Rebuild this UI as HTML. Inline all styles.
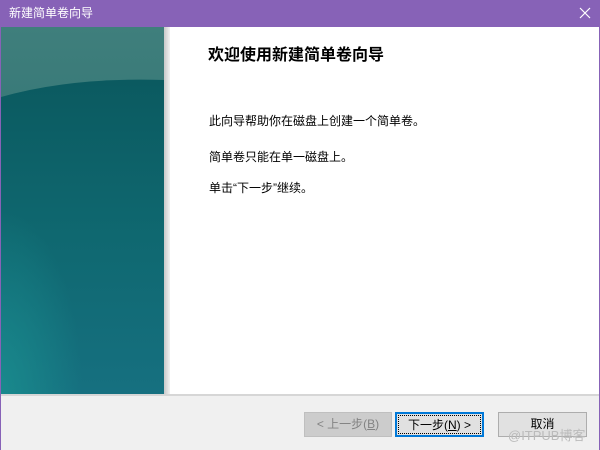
<!DOCTYPE html>
<html><head><meta charset="utf-8"><style>
*{margin:0;padding:0;box-sizing:border-box}
body{width:600px;height:450px;overflow:hidden;background:#fff;position:relative;font-family:"Liberation Sans","Microsoft YaHei","Noto Sans CJK SC",sans-serif}
.title{position:absolute;left:0;top:0;width:600px;height:27px;background:#8762b7;color:#fff;font-size:12px;line-height:27px;padding-left:9px}
.x{position:absolute;right:9px;top:7px}
.bl{position:absolute;left:0;top:27px;width:1px;height:423px;background:#8762b7}
.br{position:absolute;right:0;top:27px;width:1px;height:423px;background:#8762b7}
.panel{position:absolute;left:1px;top:27px;width:163px;height:367px;overflow:hidden}
.shadow{position:absolute;left:164px;top:27px;width:6px;height:367px;background:linear-gradient(90deg,#c8c8c8,#f2f2f2)}
.bottom{position:absolute;left:1px;top:394px;width:598px;height:56px;background:#f0f0f0;border-top:2px solid #d6d6d6}
.h{position:absolute;left:208px;top:41px;font-size:16px;font-weight:bold;color:#000}
.t{position:absolute;left:209px;font-size:12px;color:#000}
.btn{position:absolute;top:412px;height:25px;width:88px;font-size:12px;line-height:23px;text-align:center;border:1px solid #adadad;background:#e1e1e1;color:#000}
</style></head><body>
<div class="title">新建简单卷向导</div>
<svg class="x" width="12" height="12"><path d="M1 1L11 11M11 1L1 11" stroke="#fff" stroke-width="1.2"/></svg>
<div class="bl"></div><div class="br"></div>
<div class="panel">
<svg width="163" height="367" style="position:absolute;left:0;top:0">
<defs><linearGradient id="g1" x1="0" y1="0" x2="0" y2="1"><stop offset="0" stop-color="#3f7f7c"/><stop offset="1" stop-color="#23666c"/></linearGradient>
<linearGradient id="g2" x1="0" y1="0" x2="0" y2="1"><stop offset="0" stop-color="#0b5a60"/><stop offset="0.5" stop-color="#0f6870"/><stop offset="1" stop-color="#167080"/></linearGradient>
<radialGradient id="g3" cx="0" cy="1" r="0.5"><stop offset="0" stop-color="#1a9090" stop-opacity="0.8"/><stop offset="1" stop-color="#1a9090" stop-opacity="0"/></radialGradient></defs>
<rect width="163" height="367" fill="url(#g1)"/>
<path d="M0 70 Q70 50 163 53 L163 367 L0 367Z" fill="url(#g2)"/>
<rect width="163" height="367" fill="url(#g3)"/>
</svg></div>
<div class="shadow"></div>
<div class="h">欢迎使用新建简单卷向导</div>
<div class="t" style="top:112px">此向导帮助你在磁盘上创建一个简单卷。</div>
<div class="t" style="top:148px">简单卷只能在单一磁盘上。</div>
<div class="t" style="top:179px">单击“下一步”继续。</div>
<div class="bottom"></div>
<div class="btn" style="left:304px;background:#cccccc;border-color:#bfbfbf;color:#838383">&lt; 上一步(<u>B</u>)</div>
<div class="btn" style="left:395px;width:89px;border:2px solid #0078d7;outline:1px dotted #000;outline-offset:-4px">下一步(<u>N</u>) &gt;</div>
<div class="btn" style="left:498px;width:89px">取消</div>
<div style="position:absolute;left:508px;top:425px;font-size:13px;color:#bbb">@ITPUB博客</div>
</body></html>
